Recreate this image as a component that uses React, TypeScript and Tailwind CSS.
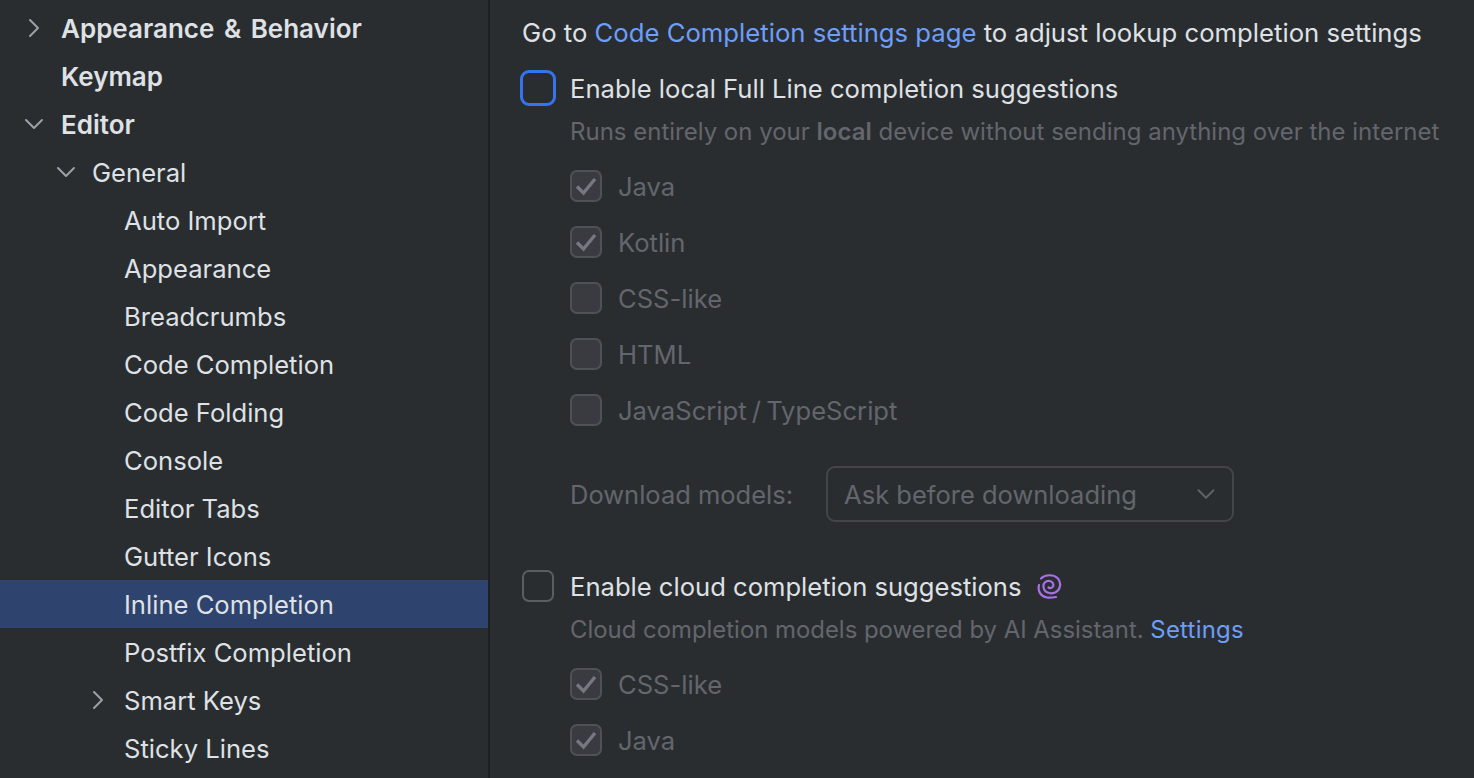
import React from 'react';
import { ChevronDown, ChevronRight } from 'lucide-react';

type TreeRow = { label: string; indent: number; bold?: boolean; arrow?: 'right' | 'down'; selected?: boolean };

const rows: TreeRow[] = [
  { label: 'Appearance & Behavior', indent: 0, bold: true, arrow: 'right' },
  { label: 'Keymap', indent: 0, bold: true },
  { label: 'Editor', indent: 0, bold: true, arrow: 'down' },
  { label: 'General', indent: 1, arrow: 'down' },
  { label: 'Auto Import', indent: 2 },
  { label: 'Appearance', indent: 2 },
  { label: 'Breadcrumbs', indent: 2 },
  { label: 'Code Completion', indent: 2 },
  { label: 'Code Folding', indent: 2 },
  { label: 'Console', indent: 2 },
  { label: 'Editor Tabs', indent: 2 },
  { label: 'Gutter Icons', indent: 2 },
  { label: 'Inline Completion', indent: 2, selected: true },
  { label: 'Postfix Completion', indent: 2 },
  { label: 'Smart Keys', indent: 2, arrow: 'right' },
  { label: 'Sticky Lines', indent: 2 },
];

const indentClass = ['pl-[61px]', 'pl-[92px]', 'pl-[124px]'];
const arrowLeftClass = ['left-[18px]', 'left-[50px]', 'left-[82px]'];

const Tree = () => (
  <div className="w-[488px] shrink-0 pt-1 text-[#dfe1e5]">
    {rows.map((row) => (
      <div
        key={row.label}
        className={`relative flex h-12 items-center ${indentClass[row.indent]} ${row.bold ? 'text-[26px] font-semibold [word-spacing:3px]' : 'text-[25.6px]'} ${row.selected ? 'bg-[#2e436e]' : ''}`}
      >
        {row.arrow === 'right' && (
          <ChevronRight size={32} strokeWidth={1.5} className={`absolute ${arrowLeftClass[row.indent]} text-[#9da0a8]`} />
        )}
        {row.arrow === 'down' && (
          <ChevronDown size={32} strokeWidth={1.5} className={`absolute ${arrowLeftClass[row.indent]} text-[#9da0a8]`} />
        )}
        <span className={row.bold ? '' : 'pt-[2px]'}>{row.label}</span>
      </div>
    ))}
  </div>
);

const SubCheck = ({ label, checked }: { label: string; checked?: boolean }) => (
  <div className="flex h-14 items-center pl-12 text-[25.6px] text-[#63666c]">
    <span className="flex h-8 w-8 items-center justify-center rounded-[7px] border-2 border-[#4e5157] bg-[#393b40]">
      {checked && (
        <svg width="24" height="24" viewBox="0 0 24 24" fill="none">
          <path d="M3 12.5 L9.5 19 L21 5" stroke="#75787f" strokeWidth="3.4" />
        </svg>
      )}
    </span>
    <span className="ml-4 pt-[2px] [word-spacing:-2px]">{label}</span>
  </div>
);

const AiSpiral = () => (
  <svg width="26" height="26" viewBox="0 0 26 26" fill="none" className="ml-[15px]">
    <path
      d="M5 5.5 C9 1.5 17 1 21.5 5 C26 9.5 24.5 17 19 19.5 C14 21.5 8 19.5 7.5 14 C7 10 10 7.5 13.5 8 C16.5 8.5 18 11 17 13.5 C16 15 14 15.5 12.5 14.5 M3 12 C1.5 18 4.5 23.5 11 24.5 C14 25 17 24.5 20 24"
      stroke="#a871e8"
      strokeWidth="2.2"
      strokeLinecap="round"
    />
  </svg>
);

export default function App() {
  return (
    <div className="flex h-[778px] w-[1474px] overflow-hidden bg-[#2a2d30] font-['Inter',sans-serif]">
      <Tree />
      <div className="w-[2px] shrink-0 bg-[#1e1f22]" />
      <div className="min-w-0 flex-1 pl-8 text-[#dfe1e5]">
        <div className="flex h-[65px] items-center whitespace-pre pt-[2px] text-[25.7px]">
          Go to <span className="text-[#6d9ef8]">Code Completion settings page</span> to adjust lookup completion settings
        </div>

        <div className="flex h-[46px] items-center text-[25.6px]">
          <span className="-ml-[2px] h-9 w-9 shrink-0 rounded-[9px] border-[3.5px] border-[#3574f0]" />
          <span className="ml-[14px] pt-[2px]">Enable local Full Line completion suggestions</span>
        </div>
        <div className="flex h-10 items-center whitespace-pre pl-12 pt-[2px] text-[24px] text-[#63666c]">
          Runs entirely on your <b className="font-semibold">local</b> device without sending anything over the internet
        </div>

        <div className="mt-[7px]">
          <SubCheck label="Java" checked />
          <SubCheck label="Kotlin" checked />
          <SubCheck label="CSS-like" />
          <SubCheck label="HTML" />
          <SubCheck label="JavaScript / TypeScript" />
        </div>

        <div className="mt-[28px] flex items-center pl-12 text-[25.5px] text-[#63666c]">
          <span className="pt-[2px]">Download models:</span>
          <div className="ml-[33px] flex h-[56px] w-[408px] items-center justify-between rounded-[9px] border-2 border-[#43454a] pl-4 pr-[11px]">
            <span className="pt-[2px]">Ask before downloading</span>
            <ChevronDown size={30} strokeWidth={1.5} className="text-[#5f6268]" />
          </div>
        </div>

        <div className="mt-[41px] flex h-[46px] items-center text-[25.6px]">
          <span className="h-8 w-8 shrink-0 rounded-[7px] border-2 border-[#5a5d63]" />
          <span className="ml-4 pt-[2px]">Enable cloud completion suggestions</span>
          <AiSpiral />
        </div>
        <div className="flex h-10 items-center whitespace-pre pl-12 pt-[2px] text-[23.9px] text-[#63666c]">
          Cloud completion models powered by AI Assistant. <span className="text-[#6d9ef8] tracking-[0.25px]">Settings</span>
        </div>

        <div className="mt-[7px]">
          <SubCheck label="CSS-like" checked />
          <SubCheck label="Java" checked />
        </div>
      </div>
    </div>
  );
}
